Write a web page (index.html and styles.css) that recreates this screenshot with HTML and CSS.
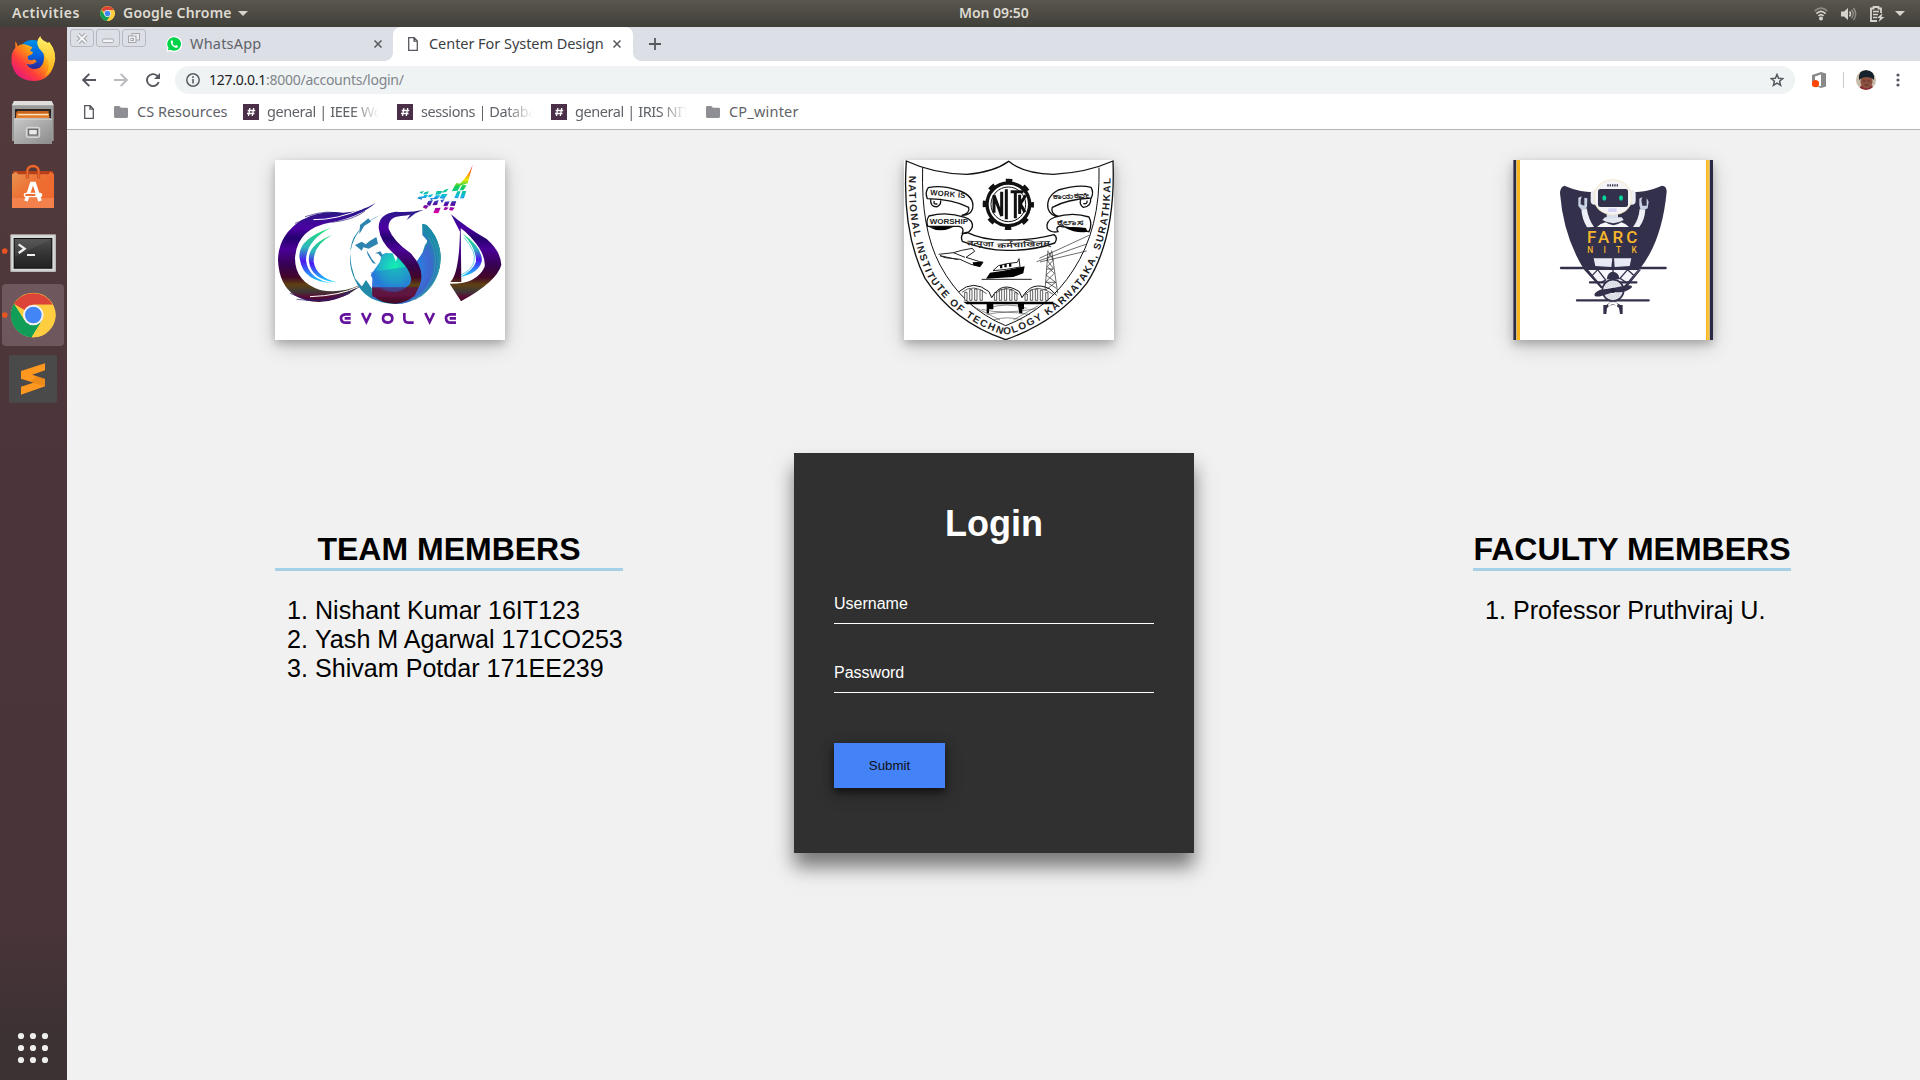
FILE: index.html
```html
<!DOCTYPE html>
<html lang="en">
<head>
<meta charset="utf-8">
<title>Center For System Design</title>
<link rel="stylesheet" href="styles.css">
</head>
<body>
<svg class="defs" width="0" height="0" aria-hidden="true">
  <defs>
    <symbol id="chrome" viewBox="0 0 136 136">
      <circle cx="68" cy="68" r="67" fill="#ffcd40"/>
      <path d="M68 68 L10 35 A67 67 0 0 1 126 37 L68 37Z" fill="#db4437"/>
      <path d="M10 34 A67 67 0 0 0 63 135 L95 83 L41 83Z" fill="#0f9d58"/>
      <path d="M95 83 L63 135 A67 67 0 0 0 126 37 L68 37Z" fill="#ffcd40"/>
      <circle cx="68" cy="68" r="31" fill="#f1f1f1"/>
      <circle cx="68" cy="68" r="25" fill="#4285f4"/>
    </symbol>
    <symbol id="page" viewBox="0 0 10 14"><path d="M.7.7h5.5l3.1 3.2v9.4H.7zM6 .7v3.5h3.3" fill="none" stroke="#55585c" stroke-width="1.3"/></symbol>
    <symbol id="folder" viewBox="0 0 14 12"><path d="M1.2 0H5.3L7 1.8h5.8Q14 1.8 14 3v7.6Q14 12 12.8 12H1.2Q0 12 0 10.6V1.2Q0 0 1.2 0z" fill="#8e8f94"/></symbol>
    <symbol id="close" viewBox="0 0 8 8"><path d="M.5.5l7 7M7.5.5l-7 7" stroke="#55585c" stroke-width="1.5"/></symbol>
    <symbol id="slack" viewBox="0 0 16 16"><path fill="#4b2e48" d="M0 0h16v16H0z"/><path d="M6.9 4L5.5 12M10.7 4L9.3 12M4.7 6.5h7.5M4 9.5h7.5" stroke="#fff" stroke-width="1.3"/></symbol>
  </defs>
</svg>

<header class="topbar">
  <span class="activities">Activities</span>
  <svg class="app-icon" width="15" height="15"><use href="#chrome"/></svg>
  <span class="app-name">Google Chrome</span>
  <svg class="caret" width="10" height="5"><path d="M0 0h10L5 5z" fill="#d6d3cc"/></svg>
  <span class="clock">Mon 09:50</span>
  <div class="status">
    <svg width="14" height="14" viewBox="0 0 14 14"><g fill="none" stroke="#d6d3cc" stroke-width="1.7"><path d="M.6 4.2Q7-1.8 13.4 4.2" opacity=".45"/><path d="M2.4 6.6Q7 2 11.6 6.6M4.4 9Q7 6.4 9.6 9"/></g><circle cx="7" cy="11.4" r="2" fill="#d6d3cc"/></svg>
    <svg width="16" height="14" viewBox="0 0 16 14"><path d="M0 4.5h3L7 1v12L3 9.5H0z" fill="#d6d3cc"/><path d="M8.5 4.5q2 2.5 0 5" stroke="#d6d3cc" fill="none" stroke-width="1.5"/><path d="M10.5 2.8q3.4 4.2 0 8.4M12.5 1q4.4 6 0 12" stroke="#d6d3cc" opacity=".5" fill="none" stroke-width="1.4"/></svg>
    <svg width="15" height="16" viewBox="0 0 15 16"><path d="M7 15H1V2.5H3.5V1h5v1.500H11V7" fill="none" stroke="#d6d3cc" stroke-width="1.8"/><path d="M3 5.500h6M3 8.500h5M3 11.500h4" stroke="#d6d3cc" stroke-width="1.5"/><path d="M12.500 7L7 12h3L8.500 16 14.500 11H11.500z" fill="#d6d3cc"/></svg>
    <svg width="10" height="5"><path d="M0 0h10L5 5z" fill="#d6d3cc"/></svg>
  </div>
</header>

<div class="desktop">
  <nav class="dock">
    <div class="tile">
      <svg viewBox="6 24 186 186">
        <defs>
          <linearGradient id="fox" x1=".9" y1=".1" x2=".1" y2=".9"><stop offset="0" stop-color="#fff04a"/><stop offset=".4" stop-color="#ff9a12"/><stop offset=".7" stop-color="#ff3b3c"/><stop offset="1" stop-color="#e31587"/></linearGradient>
          <linearGradient id="foxtail" x1="0" y1="0" x2="0" y2="1"><stop offset="0" stop-color="#fff36a"/><stop offset="1" stop-color="#ffa90c"/></linearGradient>
          <linearGradient id="globe" x1="0" y1="0" x2="0" y2="1"><stop offset="0" stop-color="#0090e8"/><stop offset=".55" stop-color="#0060df"/><stop offset="1" stop-color="#3a1f8c"/></linearGradient>
        </defs>
        <circle cx="98" cy="105" r="45" fill="url(#globe)"/>
        <path d="M46 64Q51 69 53 79Q60 72 73 73Q83 74 97 82L90 93L99 96L96 103L83 109L84 118Q94 124 104 118L110 125Q96 137 79 132Q94 155 119 143Q136 130 131 102Q125 72 148 66Q174 100 162 133Q149 184 99 183Q45 181 35 130Q32 95 46 84Z" fill="url(#fox)"/>
        <path d="M121 48Q123 60 141 67Q166 89 164 121Q161 153 135 169Q152 145 143 120Q132 100 117 85Q105 65 121 48Z" fill="url(#foxtail)"/>
      </svg>
    </div>
    <div class="tile">
      <svg viewBox="6 216 186 186">
        <defs><linearGradient id="steel" x1="0" y1="0" x2="1" y2="1"><stop offset="0" stop-color="#c9c9c9"/><stop offset="1" stop-color="#8b8b8b"/></linearGradient></defs>
        <path d="M42 243H155L161 256V363H36V256Z" fill="#9a9a9a"/><path d="M42 243H155L161 256H36Z" fill="#dedede"/>
        <path d="M45 267H153V295H45Z" fill="#2b2522"/><path d="M52 273H146V295H48V279Z" fill="#c36521"/><path d="M52 280H147V295H48Z" fill="#e88b3b"/><path d="M54 284H145" stroke="#fff0d8" stroke-width="3"/><path d="M50 290H149" stroke="#df7a29" stroke-width="4"/>
        <path d="M45 294H153L156 300V372H42V300Z" fill="url(#steel)"/><path d="M42 298H156" stroke="#dadada" stroke-width="2"/>
        <rect x="79" y="322" width="40" height="30" rx="4" fill="#b5b5b5" stroke="#dfdfdf" stroke-width="3"/><rect x="86" y="328" width="26" height="17" fill="#e9e9e9" stroke="#555" stroke-width="3"/>
      </svg>
    </div>
    <div class="tile">
      <svg viewBox="6 408 186 186">
        <defs><linearGradient id="bag" x1="0" y1="0" x2="1" y2="1"><stop offset="0" stop-color="#e8934f"/><stop offset=".5" stop-color="#ee6d31"/><stop offset="1" stop-color="#f2672e"/></linearGradient></defs>
        <path d="M40 453H158L162 465H36Z" fill="#b84018"/><path d="M36 463L48 455L55 463L145 463L152 455L162 463V564H36Z" fill="url(#bag)"/><path d="M36 534H162V564H36Z" fill="#f58a57" opacity=".7"/>
        <path d="M82 475V452Q84 439 99 438Q114 439 116 452V475" fill="none" stroke="#a9401a" stroke-width="9"/><path d="M82 475V452Q84 439 99 438Q114 439 116 452V475" fill="none" stroke="#ea6a32" stroke-width="6"/>
        <path d="M78 543L95 491H103L120 543" fill="none" stroke="#fff" stroke-width="11"/><rect x="71" y="518" width="56" height="14" rx="7" fill="#fff"/><path d="M76 525H106" stroke="#ee6d31" stroke-width="6"/>
      </svg>
    </div>
    <div class="tile">
      <svg viewBox="6 600 186 186">
        <defs><linearGradient id="term" x1="0" y1="0" x2="0" y2="1"><stop offset="0" stop-color="#4d4d4d"/><stop offset=".5" stop-color="#353535"/><stop offset="1" stop-color="#222"/></linearGradient></defs>
        <rect x="31" y="643" width="137" height="113" rx="3" fill="#b9b9b9"/><path d="M34 646H164V752H34Z" fill="#d9d9d9"/><path d="M41 654H157V746H41Z" fill="#111"/><path d="M44 657H154V743H44Z" fill="url(#term)"/><path d="M44 657H154L44 712Z" fill="#fff" opacity=".06"/>
        <path d="M56 673L74 686L56 699" fill="none" stroke="#f0f0f0" stroke-width="7"/><path d="M81 705H105" stroke="#f0f0f0" stroke-width="6"/>
        <circle cx="14" cy="693" r="8.500" fill="#e95420"/>
      </svg>
    </div>
    <div class="tile active">
      <svg viewBox="6 792 186 186"><use href="#chrome" x="32" y="817" width="136" height="136"/><circle cx="14" cy="885" r="8.500" fill="#e95420"/></svg>
    </div>
    <div class="tile">
      <svg viewBox="6 984 186 186"><rect x="27" y="1005" width="144" height="143" rx="6" fill="#4a4a4a"/><path d="M63 1053L135 1030V1051L63 1076Z" fill="#ff9820"/><path d="M63 1100L135 1077V1099L63 1124Z" fill="#ff9820"/><path d="M63 1053L135 1077V1099L63 1076Z" fill="#ff9820"/><path d="M91 1086L135 1099L135 1077L110 1069Z" fill="#d97b14" opacity=".5"/></svg>
    </div>
    <svg class="apps" width="32" height="32" viewBox="0 0 32 32" fill="#efefef"><circle cx="4" cy="4" r="3.100"/><circle cx="16" cy="4" r="3.100"/><circle cx="28" cy="4" r="3.100"/><circle cx="4" cy="16" r="3.100"/><circle cx="16" cy="16" r="3.100"/><circle cx="28" cy="16" r="3.100"/><circle cx="4" cy="28" r="3.100"/><circle cx="16" cy="28" r="3.100"/><circle cx="28" cy="28" r="3.100"/></svg>
  </nav>

  <div class="browser">
    <div class="tabs">
      <div class="window-buttons">
        <span class="window-button"><svg width="12" height="11" viewBox="0 0 12 11"><path d="M2 1.500l8 8M10 1.500l-8 8" stroke="#a4a6ab" stroke-width="4"/><path d="M2 1.500l8 8M10 1.500l-8 8" stroke="#f5f6f8" stroke-width="1.800"/></svg></span>
        <span class="window-button"><svg width="12" height="11" viewBox="0 0 12 11"><rect x=".6" y="6" width="10.800" height="3.600" rx="1" fill="#f5f6f8" stroke="#a4a6ab"/></svg></span>
        <span class="window-button"><svg width="12" height="11" viewBox="0 0 12 11" fill="#eceef2" stroke="#a4a6ab"><rect x="4" y=".5" width="7.500" height="6.500"/><rect x=".5" y="3" width="7.500" height="6.500"/><rect x="3" y="5.500" width="2.500" height="2"/></svg></span>
      </div>
      <div class="tab whatsapp">
        <svg width="16" height="16" viewBox="0 0 16 16"><path d="M8 0A8 8 0 1 1 4.300 15L.2 16 1.300 12A8 8 0 0 1 8 0z" fill="#fff"/><path d="M8 1.200A6.800 6.800 0 1 1 4.500 13.700L1.800 14.300 2.500 11.900A6.800 6.800 0 0 1 8 1.200z" fill="#00d348"/><path d="M5.700 4.300C3.400 5.700 5.600 10.700 9.700 11.800 11.200 12 12.300 10.900 11.900 9.900L10.200 9 9.100 10Q7.300 9.300 6.500 7.500L7.200 6.500 6.500 4.500z" fill="#fff"/></svg>
        <span class="tab-title">WhatsApp</span>
        <svg width="8" height="8"><use href="#close"/></svg>
      </div>
      <div class="tab current">
        <svg width="10" height="14"><use href="#page"/></svg>
        <span class="tab-title">Center For System Design</span>
        <svg width="8" height="8"><use href="#close"/></svg>
      </div>
      <svg class="new-tab" width="12" height="12"><path d="M6 0v12M0 6h12" stroke="#55585c" stroke-width="1.800"/></svg>
    </div>

    <div class="toolbar">
      <svg width="14" height="14" viewBox="0 0 14 14"><path d="M14 7H1.500M7.300.8L1.200 7l6.100 6.200" fill="none" stroke="#55585e" stroke-width="1.900"/></svg>
      <svg width="14" height="14" viewBox="0 0 14 14"><path d="M0 7h12.500M6.700.8L12.800 7l-6.100 6.200" fill="none" stroke="#b9babd" stroke-width="1.900"/></svg>
      <svg width="14" height="14" viewBox="0 0 14 14"><path d="M12.700 9A6 6 0 1 1 11 2.600L12.500 4" fill="none" stroke="#55585e" stroke-width="1.900"/><path d="M14 0v6H8z" fill="#55585e"/></svg>
      <div class="omnibox">
        <svg width="14" height="14" viewBox="0 0 14 14"><circle cx="7" cy="7" r="6.200" fill="none" stroke="#5a5d62" stroke-width="1.500"/><path d="M7 6v4.500M7 3.300v1.600" stroke="#5a5d62" stroke-width="1.600"/></svg>
        <span class="url"><b>127.0.0.1</b>:8000/accounts/login/</span>
        <svg width="14" height="14" viewBox="0 0 14 14"><path d="M7 1.500L8.600 5.300 12.700 5.600 9.600 8.300 10.600 12.300 7 10.100 3.400 12.300 4.400 8.300 1.300 5.600 5.400 5.300z" fill="none" stroke="#55585e" stroke-width="1.500"/></svg>
      </div>
      <svg class="office" width="15" height="16" viewBox="0 0 15 16"><path d="M0 3L9 0v2.500L3 4.500V9L0 10.500z" fill="#8a8a8a"/><path d="M9 0l5 1.500v13L9 16 4.500 14.500 9 14z" fill="#8a8a8a"/><circle cx="3.500" cy="11.700" r="3.600" fill="#ff4500"/></svg>
      <span class="divider"></span>
      <svg class="avatar" width="20" height="20" viewBox="0 0 20 20"><defs><clipPath id="round"><circle cx="10" cy="10" r="10"/></clipPath></defs><g clip-path="url(#round)"><path fill="#c9bba9" d="M0 0h20v20H0z"/><path d="M4 17L6 15h9l5 5H3z" fill="#8d2a36"/><ellipse cx="10.500" cy="11.500" rx="6" ry="7" fill="#8a5140"/><path d="M3 10Q2 0 10 0Q19 0 18 10L15.500 8Q10 6 5 8.500z" fill="#16222c"/><path d="M7 11h2.500M11.500 11H14M8.500 15h4" stroke="#5d2d28" stroke-width="1"/></g></svg>
      <svg class="menu" width="4" height="14" viewBox="0 0 4 14" fill="#55585e"><circle cx="2" cy="2" r="1.600"/><circle cx="2" cy="7" r="1.600"/><circle cx="2" cy="12" r="1.600"/></svg>
    </div>

    <div class="bookmarks">
      <svg class="bare" width="10" height="14"><use href="#page"/></svg>
      <div class="bookmark cs"><svg width="14" height="12"><use href="#folder"/></svg><span>CS Resources</span></div>
      <div class="bookmark long"><svg width="16" height="16"><use href="#slack"/></svg><span>general | IEEE Wo</span></div>
      <div class="bookmark long"><svg width="16" height="16"><use href="#slack"/></svg><span>sessions | Databa</span></div>
      <div class="bookmark long"><svg width="16" height="16"><use href="#slack"/></svg><span>general | IRIS NIT</span></div>
      <div class="bookmark winter"><svg width="14" height="12"><use href="#folder"/></svg><span>CP_winter</span></div>
    </div>

    <main class="page">
      <section class="logos">
        <svg class="logo" width="230" height="180" viewBox="45 45 690 540">
          <defs>
            <linearGradient id="band" gradientUnits="userSpaceOnUse" x1="0" y1="195" x2="0" y2="475"><stop offset="0" stop-color="#2a1a8a"/><stop offset=".2" stop-color="#4b00a0"/><stop offset=".3" stop-color="#24006e"/><stop offset=".42" stop-color="#4a0096"/><stop offset=".6" stop-color="#35024f"/><stop offset=".72" stop-color="#430528"/><stop offset=".8" stop-color="#5f4114"/><stop offset=".87" stop-color="#3f3a36"/><stop offset=".93" stop-color="#5a0d35"/><stop offset="1" stop-color="#3d0a25"/></linearGradient>
            <linearGradient id="arc" x1="0" y1="0" x2="0" y2="1"><stop offset="0" stop-color="#1fe070"/><stop offset=".35" stop-color="#2fb5c0"/><stop offset=".6" stop-color="#4a18f0"/><stop offset="1" stop-color="#18d5ff"/></linearGradient>
            <radialGradient id="sea" gradientUnits="userSpaceOnUse" cx="405" cy="365" r="140"><stop offset="0" stop-color="#12f0b0"/><stop offset=".3" stop-color="#20bcc4"/><stop offset=".5" stop-color="#2b7fe0"/><stop offset=".75" stop-color="#3e66d0"/><stop offset="1" stop-color="#1a8aa8"/></radialGradient>
            <linearGradient id="jet" gradientUnits="userSpaceOnUse" x1="0" y1="60" x2="0" y2="205"><stop offset="0" stop-color="#e00020"/><stop offset=".18" stop-color="#ff8a00"/><stop offset=".3" stop-color="#f0e800"/><stop offset=".45" stop-color="#10d050"/><stop offset=".65" stop-color="#10b8e8"/><stop offset=".8" stop-color="#4b10a0"/><stop offset="1" stop-color="#f000a8"/></linearGradient>
          </defs>
          <path d="M45 45H735V585H45Z" fill="#fff"/>
          <path d="M250 203Q180 195 125 225Q55 270 54 345Q57 420 105 452Q165 485 235 460Q280 445 300 420Q240 447 180 435Q105 410 105 340Q110 250 215 232Q300 215 347 174Q305 200 250 203Z" fill="url(#band)"/>
          <path d="M135 215Q210 190 250 210M105 235Q190 195 270 213M215 232Q280 225 315 198M90 445Q180 490 270 445M110 463Q200 480 300 425" fill="none" stroke="#2b1a7a" stroke-width="2"/>
          <path d="M160 224Q230 225 310 190M150 455Q240 452 295 425" fill="none" stroke="#fff" stroke-width="3"/>
          <path d="M213 248Q105 285 120 345Q130 410 220 415Q145 405 138 345Q140 285 213 248Z" fill="url(#arc)"/><path d="M216 270Q140 300 147 350Q155 405 230 412Q168 395 161 350Q160 300 216 270Z" fill="url(#arc)"/>
          <path d="M375 207A139 139 0 0 0 285 405Q315 475 407 477A138 138 0 0 0 500 240L487 236L490 270Q510 285 495 300L487 325L470 350Q475 370 480 410Q470 465 400 470Q350 470 310 430L285 400L275 365Q262 300 290 265Q320 220 375 207Z" fill="#218aa9"/>
          <path d="M500 240A138 138 0 0 1 407 477L335 460L337 400L332 390L360 350L365 330L377 324L398 325L408 350L413 330L480 390L470 350L490 320L505 290L487 270L487 237Z" fill="url(#sea)"/>
          <g fill="none" stroke="#36a4a8" stroke-width="2"><path d="M505 275A100 120 0 0 1 450 465M517 280A110 125 0 0 1 465 464M530 290A120 130 0 0 1 480 455"/></g>
          <path d="M300 240l25-20 8 10-20 12-15 25zM285 300l20-10 12 8 12-10 20-12 5 20-28 15-16-4-5 10zM320 315l16 28 12 14-10-3-15-25zM345 325l16-6 8 12-6 5-8-10z" fill="#2d84b0"/>
          <path d="M303 428L318 405L335 430L337 455Z" fill="#218aa9"/>
          <path d="M356 248Q355 207 407 200Q450 204 491 194Q455 211 423 213Q382 217 386 251Q400 288 452 325Q505 382 471 437Q459 468 407 476Q365 477 337 451V427Q410 460 450 417Q465 383 400 325Q360 290 356 248Z" fill="url(#band)"/><path d="M440 225L453 205L475 198Z" fill="#2b2193"/>
          <path d="M337 427H475L463 455H338Z" fill="#621343" opacity=".85"/><path d="M334 385Q355 445 410 440Q450 435 450 390L440 365L330 382Z" fill="#246cd2" opacity=".4"/>
          <path d="M573 208Q615 245 680 282Q722 318 724 360Q710 410 603 469L569 416Q650 418 674 365Q678 330 640 286Q620 262 602 250L604 411H571Q597 387 600 260Z" fill="url(#band)"/>
          <path d="M607 265Q670 310 665 350Q655 385 600 396Q640 375 648 350Q650 310 607 265Z" fill="url(#arc)"/><path d="M612 277Q650 320 642 350Q635 375 603 390" fill="none" stroke="#26bdd5" stroke-width="2"/>
          <path d="M638 60L623 115L590 125Q625 95 638 60ZM589 114L604 117L593 137L575 139ZM607 120L620 121L610 136L598 136ZM592 139L602 139L594 160L583 158ZM607 138L619 138L612 160L600 160ZM554 134L566 131L558 141L545 143ZM530 138L548 138L541 148L526 150ZM546 147L563 147L553 161L538 160ZM528 151L542 151L532 162L518 163ZM478 141L492 138L485 147ZM495 141L507 139L502 148L489 148ZM508 149L520 148L513 156L503 157ZM477 155L489 154L485 164L471 160ZM493 149L505 150L497 159L487 158ZM509 160L522 158L514 166ZM505 168L519 165L510 183L500 178ZM523 169L536 165L531 180L517 181ZM541 166L554 162L546 174ZM494 180L507 182L498 192L488 187ZM526 189L542 188L535 205L520 204ZM555 170L569 169L562 184L550 183ZM575 169L589 168L584 183L570 182ZM555 186L566 188L559 195L550 194ZM571 186L584 188L577 197L567 195Z" fill="url(#jet)"/>
          <g fill="none" stroke="#65129c" stroke-width="8"><path d="M272 508H255Q242 511 243 520Q244 533 257 533H272M254 520H272M306 504L319 531L332 504M378 508H388Q397 510 397 520Q397 532 383 533Q368 531 369 519Q370 509 378 508ZM433 504V522Q434 533 444 533H461M496 504L509 531L522 504M588 508H571Q557 510 558 520Q559 533 572 533H588M569 520H588"/></g>
        </svg>

        <svg class="logo" width="210" height="180" viewBox="42 45 630 540">
          <path d="M42 45H672V585H42Z" fill="#fff"/>
          <g fill="none" stroke="#111" stroke-width="4">
            <path d="M49 48Q130 86 230 88Q310 82 356 49Q400 86 490 88Q590 83 669 48Q678 280 590 415Q500 530 347 584Q190 530 105 400Q35 260 49 48Z"/>
            <path d="M98 68Q92 250 150 360Q220 490 347 542Q475 492 550 375Q632 250 627 68" stroke-width="3"/>
            <path d="M115 128Q155 118 210 138Q254 155 248 190Q242 212 215 211Q241 205 236 187Q190 163 112 161Q104 142 115 128ZM117 213Q170 198 225 217Q250 225 247 246Q238 268 217 265Q224 248 207 244L113 244Q107 228 117 213ZM122 162Q120 187 142 185Q156 177 151 162M133 168Q128 178 142 177"/>
            <path d="M603 127Q565 117 505 135Q468 155 474 190Q480 212 505 214Q480 205 487 187Q530 163 604 159Q612 142 603 127ZM597 216Q550 200 495 216Q465 228 472 251Q483 264 504 260Q495 247 510 243L597 260Q608 238 597 216ZM602 160Q604 185 580 187Q567 179 572 163M591 167Q593 178 580 176"/>
            <path d="M221 265Q210 273 217 289Q290 317 355 316Q430 317 494 294Q505 278 492 269Q430 286 355 285Q280 287 231 262Z"/>
          </g>
          <path d="M117 247Q150 265 190 247Q160 243 117 247ZM525 248Q560 266 592 260L588 249Q550 244 525 248Z"/>
          <circle cx="355" cy="178" r="64" fill="#fff" stroke="#111" stroke-width="10"/><circle cx="355" cy="178" r="72" fill="none" stroke="#111" stroke-width="10" stroke-dasharray="20 36.550" stroke-dashoffset="10"/><circle cx="355" cy="178" r="52" fill="none" stroke="#111" stroke-width="3"/>
          <g fill="none" stroke="#111" stroke-width="9"><path d="M312 203V151L335 213V140M349 133V223M362 140H400M376 140V220M389 149V207M391 177L407 151M391 177L405 202"/></g>
          <g class="seal-text">
            <text x="120" y="150" font-size="23" textLength="106" transform="rotate(5 120 150)">WORK IS</text><text x="119" y="236" font-size="23" textLength="115" lengthAdjust="spacingAndGlyphs">WORSHIP</text>
            <text x="490" y="160" font-size="22" textLength="106" lengthAdjust="spacingAndGlyphs" transform="rotate(-3 540 155)">ಕಾಯಕವೇ</text><text x="500" y="241" font-size="22" textLength="80" lengthAdjust="spacingAndGlyphs">ಕೈಲಾಸ</text>
            <text x="231" y="303" font-size="22" textLength="80" lengthAdjust="spacingAndGlyphs" transform="rotate(3 270 300)">तत्पूजा</text>
            <text x="322" y="306" font-size="22" textLength="158" lengthAdjust="spacingAndGlyphs" transform="rotate(-3 400 300)">कर्मचाखिलम्</text>
            <path id="ring" d="M57 92Q52 265 114 397Q195 518 320 562Q347 574 375 562Q500 515 582 410Q668 280 661 85" fill="none"/>
            <text font-size="30"><textPath href="#ring" textLength="1225">NATIONAL INSTITUTE OF TECHNOLOGY KARNATAKA, SURATHKAL</textPath></text>
          </g>
          <path d="M146 328L190 323L215 316L247 310L254 319L228 337L269 350L279 352L270 365L243 358L210 343L165 338L150 332L204 344M190 323L225 337" fill="none" stroke="#222" stroke-width="3"/><path d="M248 352L279 350L270 365L250 361Z"/>
          <path d="M288 401L300 383L340 377L404 364L400 385L370 396Z"/><path d="M309 377L325 362L350 356L382 352L387 341L390 366L350 373ZM275 403H425" fill="none" stroke="#222" stroke-width="3"/><path d="M330 360h7v10h-7zM343 357h7v10h-7zM357 355h7v10h-7z"/>
          <g fill="none" stroke="#222" stroke-width="2"><path d="M474 316L465 437M485 316L503 445M469 372H490M466 412H497M475 320L490 345L472 365L493 385L468 410L499 430M485 320L471 345L490 370L468 390L497 412L467 435M448 340L597 271M440 350L590 297M450 351L590 318"/><path d="M292 490Q350 470 410 490M275 493Q340 510 438 491M290 508Q350 495 420 509M310 525Q350 512 397 525M245 482L330 525M445 482L370 525" stroke-width="1.500"/></g>
          <g fill="none" stroke="#111" stroke-width="3"><path d="M207 440Q250 402 297 440L305 458Q335 405 388 440L396 458Q425 405 480 432L500 451"/><path d="M216 442Q250 414 290 446M313 448Q350 413 386 448M405 448Q440 412 490 448" stroke-width="2"/></g><path d="M220 470H490V478H230ZM290 470H310V493H297V505H290ZM382 470H402V493H397V505H388Z"/>
          <g fill="#fff" stroke="#111" stroke-width="2"><path d="M224 442h7v24h-7zM239 434h7v32h-7zM254 432h7v34h-7zM270 436h7v30h-7zM313 443h7v23h-7zM328 435h7v31h-7zM343 432h7v34h-7zM359 435h7v31h-7zM374 443h7v23h-7zM405 447h7v19h-7zM421 436h7v30h-7zM436 433h7v33h-7zM451 436h7v30h-7zM467 443h7v23h-7z"/></g>
        </svg>

        <svg class="logo" width="200" height="180" viewBox="39 45 600 540">
          <path d="M39 45H639V585H39Z" fill="#fff"/><path d="M39 45H49V585H39ZM629 45H639V585H629Z" fill="#2b2a43"/><path d="M50 45H60V585H50ZM618 45H628V585H618Z" fill="#fbb51c"/><path d="M40 45V585" stroke="#777b85" stroke-width="3"/><path d="M624 45V585" stroke="#ffdf78" stroke-width="2"/>
          <path d="M193 122Q270 155 340 132Q410 155 486 122Q500 122 500 140Q486 290 417 375L375 430H303L253 375Q190 275 180 145Q180 127 193 122Z" fill="#33304b"/>
          <path d="M265 375H413L372 424H306Z" fill="#f5f5fb"/>
          <path d="M183 369H497M270 412H409M231 466H446" stroke="#33304b" stroke-width="7" stroke-linecap="round"/>
          <path d="M257 374L305 428M421 374L375 430M277 391L293 374L317 405L304 411M401 391L383 374L360 400L377 411M339 340V386" fill="none" stroke="#33304b" stroke-width="4"/>
          <path d="M281 340H337L334 366L286 363ZM342 340H394L389 363L344 366Z" fill="#e7eaf4"/>
          <path d="M244 193L260 190Q266 225 282 246L261 247Q246 223 244 193ZM419 192L436 194Q434 225 418 246H399Q416 224 419 192Z" fill="#eef0f7"/>
          <path d="M243 193L235 183V158L245 154L242 166L242 178L253 182V158L262 160L261 185L254 194ZM422 194L418 181V161L427 156L424 166L427 182L440 182V159L446 170L443 190L432 195Z" fill="#c8d2e4"/>
          <path d="M291 246Q300 236 317 232Q340 249 364 232Q380 237 387 246Z" fill="#f8f9fc"/><path d="M307 225Q340 244 371 225L365 217H315Z" fill="#e3e8f0"/><path d="M320 198H354V220H320Z" fill="#d9deee"/>
          <rect x="272" y="135" width="24" height="44" rx="12" fill="#eceef6"/><rect x="383" y="135" width="24" height="44" rx="12" fill="#eceef6"/>
          <path d="M282 162Q280 110 338 103Q395 110 396 162Q390 207 338 210Q286 205 282 162Z" fill="#f4f4f7" stroke="#f3dfb0" stroke-width="2"/><rect x="294" y="132" width="90" height="54" rx="7" fill="#33304b"/><ellipse cx="313" cy="159" rx="6" ry="8" fill="#05d49d"/><ellipse cx="363" cy="159" rx="6" ry="8" fill="#05d49d"/><path d="M322 121H355" stroke="#33304b" stroke-width="7" stroke-dasharray="4 3"/><path d="M325 190H350V201H325Z" fill="#d5d2f4"/>
          <g class="farc-text"><text x="261" y="294" font-size="51" textLength="151">FARC</text><text x="262" y="325" font-size="25" textLength="148">NITK</text></g>
          <path d="M320 403Q323 380 339 380Q357 382 359 403Z" fill="#33304b"/><circle cx="339" cy="436" r="32" fill="#edf0f6" stroke="#33304b" stroke-width="5"/><circle cx="339" cy="436" r="20" fill="none" stroke="#c3c6cf" stroke-width="17" stroke-dasharray="2 3"/>
          <path d="M284 452Q280 443 301 434L336 430L380 421Q402 420 394 429Q375 445 342 441L306 452Q290 457 284 452Z" fill="#33304b"/><circle cx="339" cy="436" r="8" fill="#29273f"/><path d="M310 480H320L327 473H350L361 480H368V507H360L357 489Q339 469 321 489L319 507H310Z" fill="#33304b"/><path d="M324 476Q339 467 354 476L350 485Q339 471 326 485Z" fill="#fff"/>
        </svg>
      </section>

      <section class="content">
        <div class="members">
          <h2>TEAM MEMBERS</h2>
          <ol><li>Nishant Kumar 16IT123</li><li>Yash M Agarwal 171CO253</li><li>Shivam Potdar 171EE239</li></ol>
        </div>
        <form class="login">
          <h1>Login</h1>
          <label class="field">Username</label>
          <label class="field">Password</label>
          <button type="button">Submit</button>
        </form>
        <div class="members">
          <h2>FACULTY MEMBERS</h2>
          <ol><li>Professor Pruthviraj U.</li></ol>
        </div>
      </section>
    </main>
  </div>
</div>
</body>
</html>
```
FILE: styles.css
```css
* { box-sizing: border-box; }
body {
  margin: 0;
  width: 1920px;
  height: 1080px;
  overflow: hidden;
  font-family: "Noto Sans", "Open Sans", sans-serif;
  font-size: 14.5px;
  color: #5f6368;
}
svg { display: block; flex: none; }
.defs { position: absolute; }

.topbar {
  display: flex;
  align-items: center;
  height: 27px;
  padding: 0 15px 0 12px;
  background: linear-gradient(#59564e, #403f39);
  color: #dfdbd2;
  font-size: 14px;
  font-weight: 600;
  white-space: nowrap;
}
.topbar span { line-height: 18px; padding-bottom: 1px; }
.activities { width: 88px; letter-spacing: .55px; }
.app-icon { margin-right: 8px; }
.app-name { width: 115px; letter-spacing: .22px; }
.clock { margin-left: 711px; width: 90px; letter-spacing: -.05px; }
.status { display: flex; align-items: center; gap: 13px; margin-left: auto; }
.status svg:last-child { margin-left: -3px; }

.desktop { display: flex; height: 1053px; }
.dock {
  display: flex;
  flex-direction: column;
  gap: 2px;
  width: 67px;
  padding: 1px 3px 16px 2px;
  background: linear-gradient(#533a3c, #4b353a 45%, #49343a 85%, #3d3233 95%);
}
.tile { width: 62px; height: 62px; border-radius: 4px; }
.tile svg { width: 62px; height: 62px; }
.tile.active { background: #6f585d; }
.apps { margin: auto 0 0 15px; }

.browser { flex: 1; display: flex; flex-direction: column; background: #fff; }

.tabs { display: flex; height: 34px; background: #dcdfe6; white-space: nowrap; }
.window-buttons { display: flex; gap: 2px; padding: 2px 0 0 3px; }
.window-button {
  display: flex;
  align-items: center;
  justify-content: center;
  width: 24px;
  height: 18px;
  border: 1px solid #b6b9bf;
  border-radius: 3px;
}
.tab { display: flex; align-items: center; }
.tab-title { line-height: 20px; padding-bottom: 2px; }
.whatsapp { width: 247px; padding-left: 20px; background: #dcdfe6; }
.whatsapp .tab-title { width: 184px; margin-left: 8px; letter-spacing: .2px; }
.current {
  position: relative;
  width: 240px;
  padding-left: 15px;
  background: #fff;
  border-radius: 8px 8px 0 0;
  color: #3c4043;
}
.current::before, .current::after {
  content: "";
  position: absolute;
  bottom: 0;
  width: 8px;
  height: 8px;
}
.current::before { left: -8px; background: radial-gradient(circle at 0 0, #dcdfe6 7.5px, #fff 8px); }
.current::after { right: -8px; background: radial-gradient(circle at 100% 0, #dcdfe6 7.5px, #fff 8px); }
.current .tab-title { width: 184px; margin-left: 11px; letter-spacing: -.05px; }
.new-tab { margin: 11px 0 0 16px; }

.toolbar { display: flex; align-items: center; gap: 18px; height: 37px; padding: 0 20px 0 15px; }
.omnibox {
  flex: 1;
  display: flex;
  align-items: center;
  height: 28px;
  margin-left: -3px;
  padding: 0 11px;
  background: #eff3f4;
  border-radius: 14px;
}
.url { flex: 1; margin-left: 9px; color: #80868b; font-size: 14px; letter-spacing: -.26px; }
.url b { font-weight: 400; color: #202124; }
.office { margin-left: -1px; }
.divider { width: 1px; height: 16px; margin-left: -2px; background: #c9cacd; }
.avatar { margin-left: -6px; }
.menu { margin-left: 2px; }

.bookmarks {
  display: flex;
  align-items: center;
  height: 32px;
  padding: 0 0 4px 17px;
  border-bottom: 1px solid #b6b4b6;
  white-space: nowrap;
}
.bare { margin-right: 20px; }
.bookmark { display: flex; align-items: center; gap: 9px; }
.bookmark span { line-height: 20px; padding-bottom: 2px; }
.cs { width: 129px; }
.long { width: 137px; margin-right: 17px; gap: 8px; letter-spacing: -.42px; }
.long span {
  width: 113px;
  -webkit-mask-image: linear-gradient(90deg, #000 75%, transparent 99%);
  mask-image: linear-gradient(90deg, #000 75%, transparent 99%);
}
.winter { margin-left: 1px; letter-spacing: .2px; }

.page {
  flex: 1;
  padding: 30px 129px 0 208px;
  background: #f1f1f1;
  color: #000;
  font-family: "Liberation Sans", Arial, sans-serif;
}
.logos { display: flex; justify-content: space-between; width: 1438px; }
.logo { box-shadow: 0 4px 8px rgba(0, 0, 0, .2), 0 6px 20px rgba(0, 0, 0, .19); }
.seal-text { font-family: "Liberation Sans", "Noto Sans", sans-serif; font-weight: 600; fill: #222; }
.farc-text { font-family: Roboto, sans-serif; font-weight: 500; fill: #f5b52c; }

.content { display: flex; justify-content: space-between; align-items: flex-start; padding-top: 113px; }
.members { margin-top: 76px; }
.members:first-child { width: 348px; }
.members:last-child { width: 318px; }
h2 {
  margin: 0;
  height: 42px;
  padding-top: 2px;
  border-bottom: 3px solid #a5d0e6;
  font-size: 32px;
  line-height: 36px;
  text-align: center;
  white-space: nowrap;
}
ol { margin: 25px 0 0; padding-left: 40px; font-size: 25.1px; line-height: 29px; white-space: nowrap; }

.login {
  width: 400px;
  height: 400px;
  margin-right: 108px;
  padding: 50px 40px;
  background: #303030;
  box-shadow: 0 14px 18px rgba(0, 0, 0, .5);
  color: #fff;
}
h1 { margin: 0 0 49px; font-size: 36px; line-height: 42px; text-align: center; }
.field {
  display: block;
  height: 30px;
  margin-bottom: 39px;
  border-bottom: 1px solid #fff;
  font-size: 16px;
  line-height: 20px;
}
.login button {
  display: block;
  width: 111px;
  height: 45px;
  margin-top: 50px;
  padding: 0;
  border: 0;
  background: #4482f7;
  box-shadow: 0 4px 8px rgba(0, 0, 0, .6), 0 6px 20px rgba(0, 0, 0, .19);
  color: #111;
  font: 13.333px "Liberation Sans", Arial, sans-serif;
}
```
